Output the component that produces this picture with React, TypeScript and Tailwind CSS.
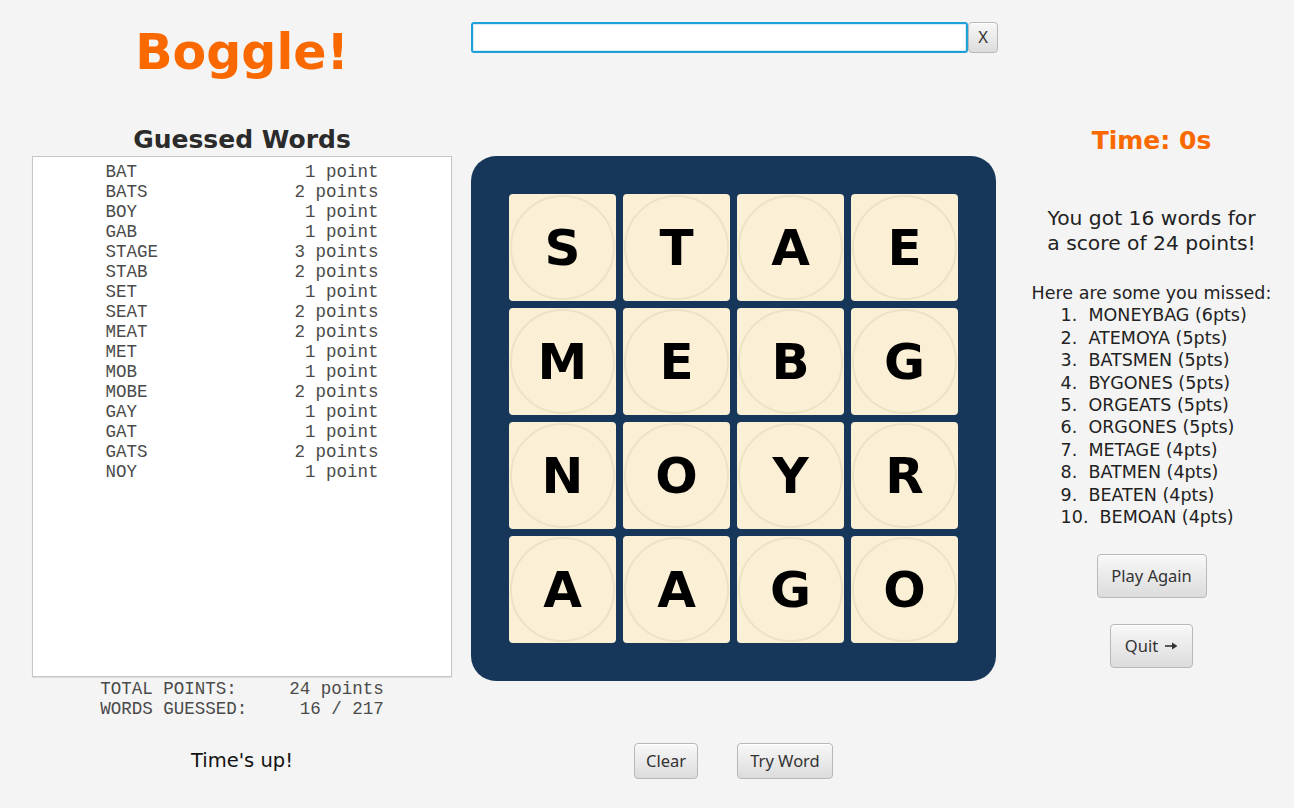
import React from "react";

const words: [string, number][] = [
  ["BAT", 1], ["BATS", 2], ["BOY", 1], ["GAB", 1], ["STAGE", 3], ["STAB", 2],
  ["SET", 1], ["SEAT", 2], ["MEAT", 2], ["MET", 1], ["MOB", 1], ["MOBE", 2],
  ["GAY", 1], ["GAT", 1], ["GATS", 2], ["NOY", 1],
];

const board = ["S", "T", "A", "E", "M", "E", "B", "G", "N", "O", "Y", "R", "A", "A", "G", "O"];

const missed = [
  "1.  MONEYBAG (6pts)",
  "2.  ATEMOYA (5pts)",
  "3.  BATSMEN (5pts)",
  "4.  BYGONES (5pts)",
  "5.  ORGEATS (5pts)",
  "6.  ORGONES (5pts)",
  "7.  METAGE (4pts)",
  "8.  BATMEN (4pts)",
  "9.  BEATEN (4pts)",
  "10.  BEMOAN (4pts)",
];

const btn =
  "flex items-center justify-center rounded-[4px] border border-[#b8b8b8] bg-gradient-to-b from-[#f8f8f8] to-[#dcdcdc] shadow-[inset_0_1px_0_#ffffff] text-[#333] font-['Noto_Sans',sans-serif] text-[16.5px]";

export default function App() {
  return (
    <div className="w-[1294px] h-[808px] bg-[#f4f4f4] flex pl-[32px] overflow-hidden">
      {/* Left column */}
      <div className="w-[420px] flex flex-col items-center">
        <div className="pt-[29px] h-[77px] text-[49px] leading-[48px] font-bold text-[#f96900] font-['DejaVu_Sans',sans-serif]">
          Boggle!
        </div>
        <div className="mt-[48px] text-[25px] leading-[30px] font-bold text-[#2b2b2b] font-['DejaVu_Sans',sans-serif]">
          Guessed Words
        </div>
        <div className="mt-[1px] w-[420px] h-[521px] bg-white border border-[#c6c6c6] shadow-[0_1px_1px_rgba(0,0,0,0.08)] pt-[5px] flex flex-col items-center">
          {words.map(([w, p]) => (
            <div
              key={w}
              className="whitespace-pre text-[17.5px] leading-[20px] text-[#4a4a4a] font-['Liberation_Mono',monospace]"
            >
              {w.padEnd(18) + (p + (p === 1 ? " point" : " points")).padStart(8)}
            </div>
          ))}
        </div>
        <div className="mt-[2px] whitespace-pre text-[17.5px] leading-[20px] text-[#4a4a4a] font-['Liberation_Mono',monospace]">
          <div>{"TOTAL POINTS:     24 points"}</div>
          <div>{"WORDS GUESSED:     16 / 217"}</div>
        </div>
        <div className="mt-[28px] text-[19.5px] leading-[28px] text-[#111] font-['DejaVu_Sans',sans-serif]">
          Time's up!
        </div>
      </div>

      {/* Middle column */}
      <div className="ml-[19px] w-[527px] flex flex-col pt-[22px]">
        <div className="flex h-[31px]">
          <div className="w-[497px] h-[31px] rounded-[3px] border-2 border-[#1fa0d8] bg-white shadow-[inset_0_0_0_1px_#d3ecf7]" />
          <div className={btn + " w-[30px] h-[31px] text-[15px]"}>X</div>
        </div>
        <div className="mt-[103px] w-[525px] h-[525px] rounded-[25px] bg-[#163759] p-[38px] grid grid-cols-4 gap-[7px]">
          {board.map((l, i) => (
            <div key={i} className="w-[107px] h-[107px] rounded-[4px] bg-[#fbf0d5] p-[1px]">
              <div className="w-full h-full rounded-full border-2 border-[#eee2c5] flex items-center justify-center">
                <span className="text-[50px] font-bold text-black font-['DejaVu_Sans',sans-serif] leading-none">
                  {l}
                </span>
              </div>
            </div>
          ))}
        </div>
        <div className="mt-[62px] w-[525px] flex justify-center gap-[39px]">
          <div className={btn + " w-[64px] h-[36px]"}>Clear</div>
          <div className={btn + " w-[96px] h-[36px]"}>Try Word</div>
        </div>
      </div>

      {/* Right column */}
      <div className="ml-[11px] w-[285px] flex flex-col items-center pt-[126px] font-['DejaVu_Sans',sans-serif]">
        <div className="text-[25px] leading-[30px] font-bold text-[#f96900]">Time: 0s</div>
        <div className="mt-[50px] text-[20.3px] leading-[25px] text-[#222] text-center">
          <div>You got 16 words for</div>
          <div>a score of 24 points!</div>
        </div>
        <div className="mt-[26px] text-[17.5px] leading-[22.4px] text-[#222] w-fit">
          <div>Here are some you missed:</div>
          <div className="pl-[29px]">
            {missed.map((m) => (
              <div key={m} className="whitespace-pre">
                {m}
              </div>
            ))}
          </div>
        </div>
        <div className={btn + " mt-[26px] w-[110px] h-[44px]"}>Play Again</div>
        <div className={btn + " mt-[26px] w-[83px] h-[44px] gap-[7px]"}>
          <span>Quit</span>
          <svg width="13" height="10" viewBox="0 0 13 10">
            <line x1="0" y1="5" x2="8" y2="5" stroke="#333" strokeWidth="1.6" />
            <polygon points="7,1.5 12.5,5 7,8.5" fill="#333" />
          </svg>
        </div>
      </div>
    </div>
  );
}
